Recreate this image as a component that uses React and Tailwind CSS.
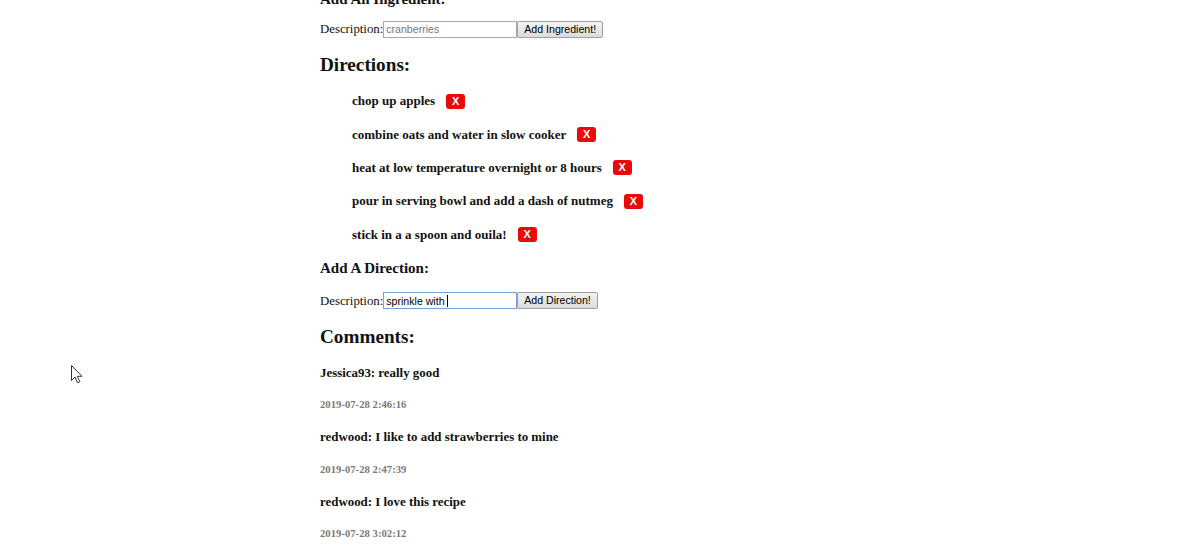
import React from 'react';

const directions = [
  'chop up apples',
  'combine oats and water in slow cooker',
  'heat at low temperature overnight or 8 hours',
  'pour in serving bowl and add a dash of nutmeg',
  'stick in a a spoon and ouila!',
];

const comments = [
  { user: 'Jessica93', text: 'really good', time: '2019-07-28 2:46:16' },
  { user: 'redwood', text: 'I like to add strawberries to mine', time: '2019-07-28 2:47:39' },
  { user: 'redwood', text: 'I love this recipe', time: '2019-07-28 3:02:12' },
];

const FormRow = ({ children, button }) => (
  <div className="flex items-center h-[18px] text-[12.8px] leading-[18px] text-[#111]">
    <span>Description:</span>
    {children}
    <button className="h-[17px] px-[6px] border border-[#a0a0a0] rounded-[2px] bg-gradient-to-b from-[#f3f3f3] to-[#dcdcdc] font-['Liberation_Sans',Arial,sans-serif] text-[10.6px] leading-[15px] text-black">
      {button}
    </button>
  </div>
);

const Cursor = () => (
  <svg className="absolute left-[71px] top-[365px]" width="12" height="19" viewBox="0 0 12 19">
    <path d="M0.5 0.5 L0.5 15.5 L4 12 L6.5 17.8 L8.8 16.8 L6.3 11.3 L11 11.3 Z" fill="#fff" stroke="#333" strokeWidth="1" strokeLinejoin="round" />
  </svg>
);

export default function App() {
  return (
    <div className="relative w-[1201px] h-[559px] overflow-hidden bg-white font-['Liberation_Serif','Times_New_Roman',serif] text-[#111]">
      <Cursor />
      <div className="flex flex-col pl-[320px]">
        <h3 className="mt-[-10px] text-[15px] leading-[18px] font-bold">Add An Ingredient:</h3>

        <div className="mt-[12px]">
          <FormRow button="Add Ingredient!">
            <input
              readOnly
              placeholder="cranberries"
              className="w-[134px] h-[17px] px-[2px] border border-[#a9a9a9] bg-white font-['Liberation_Sans',Arial,sans-serif] text-[10.6px] placeholder:text-[#777] outline-none"
            />
          </FormRow>
        </div>

        <h2 className="mt-[16px] text-[19.2px] leading-[22px] font-bold">Directions:</h2>

        <ul className="mt-[8.5px] pl-[32px]">
          {directions.map((d) => (
            <li key={d} className="flex items-center h-[33.3px] text-[13px] font-bold">
              <span>{d}</span>
              <span className="ml-[11px] flex items-center justify-center w-[19px] h-[15px] rounded-[3px] bg-[#ea0a0a] text-white font-['Liberation_Sans',Arial,sans-serif] text-[11px] font-bold leading-none">
                X
              </span>
            </li>
          ))}
        </ul>

        <h3 className="mt-[8px] text-[15px] leading-[18px] font-bold">Add A Direction:</h3>

        <div className="mt-[15px]">
          <FormRow button="Add Direction!">
            <div className="flex items-center w-[134px] h-[17px] px-[2px] border border-[#7d9fd6] bg-white font-['Liberation_Sans',Arial,sans-serif] text-[10.6px] text-black">
              <span>sprinkle with</span>
              <span className="ml-[2px] w-px h-[12px] bg-black" />
            </div>
          </FormRow>
        </div>

        <h2 className="mt-[16px] text-[19.2px] leading-[22px] font-bold">Comments:</h2>

        <div className="flex flex-col gap-[18px] mt-[17px]">
          {comments.map((c) => (
            <div key={c.time} className="flex flex-col">
              <h4 className="text-[12.9px] leading-[16px] font-bold">
                {c.user}: {c.text}
              </h4>
              <h5 className="mt-[16.5px] text-[10.7px] leading-[14px] font-bold text-[#7a7a7a]">{c.time}</h5>
            </div>
          ))}
        </div>
      </div>
    </div>
  );
}
